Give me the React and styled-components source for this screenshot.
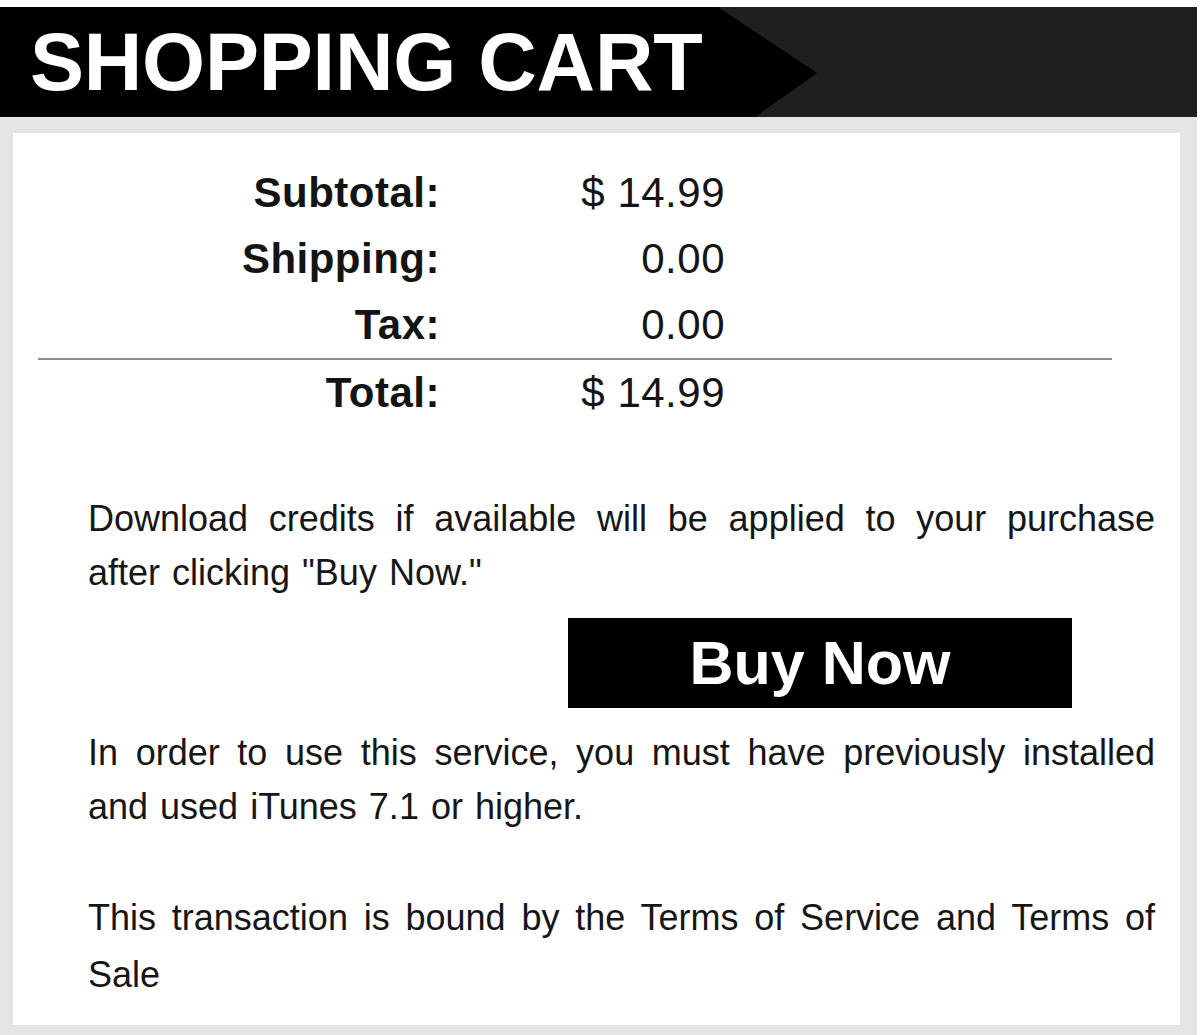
import React from 'react'
import styled, { createGlobalStyle } from 'styled-components'

const GlobalStyle = createGlobalStyle`
  body {
    margin: 0;
    background: #fff;
    font-family: "Liberation Sans", Arial, Helvetica, sans-serif;
    color: #141414;
  }
`

const Page = styled.div`
  width: 1197px;
  padding-top: 7px;
`

const Header = styled.div`
  height: 110px;
  background: #1f1f1f;
  display: flex;
`

const HeaderTab = styled.div`
  width: 817px;
  height: 110px;
  background: #000;
  clip-path: polygon(0 0, 718px 0, 817px 66px, 755px 110px, 0 110px);
  padding-left: 30px;
  box-sizing: border-box;
`

const Title = styled.h1`
  margin: 0;
  font-size: 81px;
  line-height: 110px;
  font-weight: 700;
  color: #fff;
  letter-spacing: -0.2px;
  white-space: nowrap;
`

const Frame = styled.div`
  background: #e5e5e5;
  padding: 16px 17px 11px 13px;
`

const Panel = styled.div`
  background: #fff;
  padding: 27px 0 22px;
`

const Summary = styled.div`
  margin: 0 68px 0 25px;
`

const Row = styled.div`
  display: grid;
  grid-template-columns: 402px 285px;
  height: 66px;
  line-height: 66px;
  font-size: 42px;
  letter-spacing: 0.5px;
  border-top: ${(p) => (p.$total ? '2px solid #8a8a8a' : 'none')};
`

const Label = styled.div`
  text-align: right;
  font-weight: 700;
`

const Value = styled.div`
  text-align: right;
`

const Notes = styled.div`
  padding: 0 25px 0 75px;
  margin-top: 66px;
`

const Note = styled.p`
  margin: ${(p) => p.$gap || 0}px 0 0;
  font-size: 36px;
  line-height: ${(p) => p.$lh || 54}px;
  text-align: justify;
  word-spacing: 2px;
  color: #161616;
`

const ButtonRow = styled.div`
  display: flex;
  padding-left: 480px;
  margin-top: 18px;
`

const BuyButton = styled.button`
  width: 504px;
  height: 90px;
  border: 0;
  padding: 0;
  background: #000;
  color: #fff;
  font-family: inherit;
  font-size: 61px;
  font-weight: 700;
  cursor: pointer;
`

const rows = [
  { label: 'Subtotal:', value: '$ 14.99' },
  { label: 'Shipping:', value: '0.00' },
  { label: 'Tax:', value: '0.00' }
]

export default function App() {
  return (
    <Page>
      <GlobalStyle />
      <Header>
        <HeaderTab>
          <Title>SHOPPING CART</Title>
        </HeaderTab>
      </Header>
      <Frame>
        <Panel>
          <Summary>
            {rows.map((r) => (
              <Row key={r.label}>
                <Label>{r.label}</Label>
                <Value>{r.value}</Value>
              </Row>
            ))}
            <Row $total>
              <Label>Total:</Label>
              <Value>$ 14.99</Value>
            </Row>
          </Summary>
          <Notes>
            <Note>
              Download credits if available will be applied to your purchase
              after clicking "Buy Now."
            </Note>
            <ButtonRow>
              <BuyButton>Buy Now</BuyButton>
            </ButtonRow>
            <Note $gap={18}>
              In order to use this service, you must have previously installed
              and used iTunes 7.1 or higher.
            </Note>
            <Note $gap={55} $lh={57}>
              This transaction is bound by the Terms of Service and Terms of
              Sale
            </Note>
          </Notes>
        </Panel>
      </Frame>
    </Page>
  )
}
